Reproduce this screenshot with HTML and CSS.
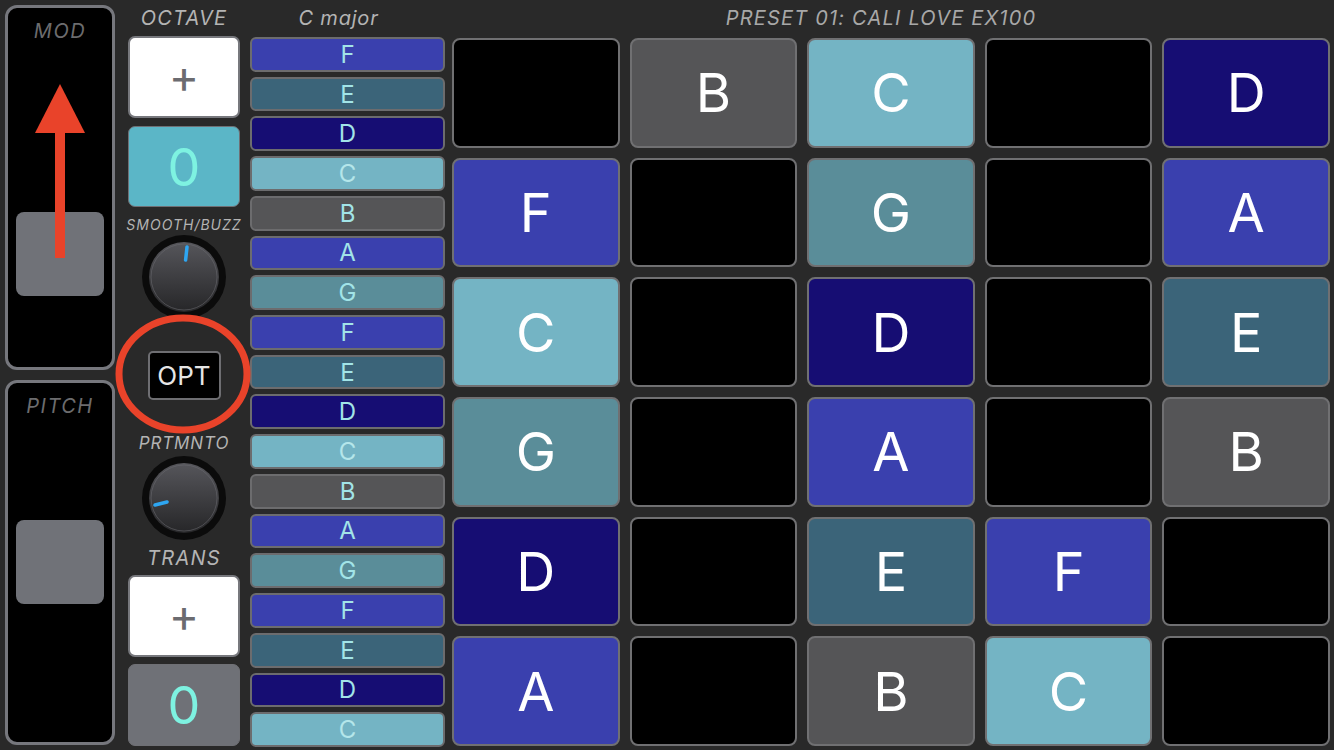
FILE: index.html
```html
<!DOCTYPE html>
<html>
<head>
    <title>Synth Pads</title>
    <link rel="stylesheet" href="styles.css">
</head>
<body>
    <div class="sliders">
        <div class="slider">
            <div class="slider-label">MOD</div>
            <div class="thumb mod-thumb"></div>
            <svg class="arrow" width="60" height="180" viewBox="0 0 60 180">
                <polygon points="30,0 55,49 5,49" fill="#e9432a"/>
                <rect x="25" y="45" width="10" height="129" fill="#e9432a"/>
            </svg>
        </div>
        <div class="slider">
            <div class="slider-label">PITCH</div>
            <div class="thumb pitch-thumb"></div>
        </div>
    </div>

    <div class="controls">
        <div class="label label-top">OCTAVE</div>
        <div class="plus">+</div>
        <div class="value octave">0</div>
        <div class="label label-small">SMOOTH/BUZZ</div>
        <div class="knob">
            <svg width="86" height="86" viewBox="0 0 86 86">
                <defs>
                    <linearGradient id="kg1" x1="0" y1="0" x2="0" y2="1">
                        <stop offset="0" stop-color="#56565b"/>
                        <stop offset="1" stop-color="#262628"/>
                    </linearGradient>
                </defs>
                <circle cx="43" cy="43" r="42" fill="#0b0b0b"/>
                <circle cx="43" cy="43" r="35" fill="url(#kg1)"/>
                <circle cx="43" cy="43" r="33" fill="none" stroke="#6a6a6f" stroke-width="0.8" opacity="0.7"/>
                <line x1="44.6" y1="26" x2="46" y2="13" stroke="#2ea6f2" stroke-width="3.5" stroke-linecap="round"/>
            </svg>
        </div>
        <div class="opt">OPT</div>
        <div class="label label-mid">PRTMNTO</div>
        <div class="knob knob-two">
            <svg width="86" height="86" viewBox="0 0 86 86">
                <defs>
                    <linearGradient id="kg2" x1="0" y1="0" x2="0" y2="1">
                        <stop offset="0" stop-color="#56565b"/>
                        <stop offset="1" stop-color="#262628"/>
                    </linearGradient>
                </defs>
                <circle cx="43" cy="43" r="42" fill="#0b0b0b"/>
                <circle cx="43" cy="43" r="35" fill="url(#kg2)"/>
                <circle cx="43" cy="43" r="33" fill="none" stroke="#6a6a6f" stroke-width="0.8" opacity="0.7"/>
                <line x1="26" y1="47" x2="14" y2="50" stroke="#2ea6f2" stroke-width="3.5" stroke-linecap="round"/>
            </svg>
        </div>
        <div class="label label-trans">TRANS</div>
        <div class="plus">+</div>
        <div class="value trans">0</div>
    </div>

    <div class="scale">
        <div class="label label-top scale-name">C major</div>
        <div class="notes" id="notes"></div>
    </div>

    <div class="pads">
        <div class="label label-top preset">PRESET 01: CALI LOVE EX100</div>
        <div class="grid" id="grid"></div>
    </div>

    <svg class="ring" width="140" height="124" viewBox="0 0 140 124">
        <ellipse cx="70" cy="62" rx="64" ry="56" fill="none" stroke="#e9432a" stroke-width="7"/>
    </svg>

    <script>
        var noteOrder = ['F','E','D','C','B','A','G','F','E','D','C','B','A','G','F','E','D','C'];
        var notes = document.getElementById('notes');
        for (var i = 0; i < noteOrder.length; i++) {
            var n = document.createElement('div');
            n.className = 'note n-' + noteOrder[i];
            n.textContent = noteOrder[i];
            notes.appendChild(n);
        }

        var pads = [
            '', 'B', 'C', '', 'D',
            'F', '', 'G', '', 'A',
            'C', '', 'D', '', 'E',
            'G', '', 'A', '', 'B',
            'D', '', 'E', 'F', '',
            'A', '', 'B', 'C', ''
        ];
        var grid = document.getElementById('grid');
        for (var j = 0; j < pads.length; j++) {
            var p = document.createElement('div');
            p.className = 'pad' + (pads[j] ? ' n-' + pads[j] : '');
            p.textContent = pads[j];
            grid.appendChild(p);
        }
    </script>
</body>
</html>
```

FILE: styles.css
```css
body {
    margin: 0;
    width: 1334px;
    height: 750px;
    background-color: #292929;
    font-family: "Inter", "Liberation Sans", sans-serif;
    display: flex;
    position: relative;
    overflow: hidden;
}
.label {
    color: #b4b4b4;
    font-style: italic;
    text-align: center;
    white-space: nowrap;
}
.label-top {
    height: 36px;
    line-height: 36px;
    font-size: 20px;
    letter-spacing: 1.2px;
}

/* left sliders */
.sliders {
    width: 110px;
    margin-left: 5px;
    padding-top: 5px;
    display: flex;
    flex-direction: column;
    gap: 10px;
}
.slider {
    height: 359px;
    background-color: #000;
    border: 3px solid #76777d;
    border-radius: 12px;
    position: relative;
}
.slider-label {
    color: #6c6c6e;
    font-style: italic;
    font-size: 20px;
    letter-spacing: 1.5px;
    text-align: center;
    margin-top: 11px;
    height: 25px;
}
.thumb {
    margin: 0 8px;
    height: 84px;
    background-color: #707278;
    border-radius: 8px;
}
.mod-thumb {
    margin-top: 168px;
}
.pitch-thumb {
    margin-top: 101px;
}
.arrow {
    position: absolute;
    left: 22px;
    top: 76px;
}

/* control column */
.controls {
    width: 112px;
    margin-left: 13px;
    display: flex;
    flex-direction: column;
    align-items: center;
}
.plus {
    width: 108px;
    height: 78px;
    background-color: #fff;
    border: 2px solid #77787d;
    border-radius: 7px;
    color: #6b6b70;
    font-size: 46px;
    line-height: 76px;
    text-align: center;
}
.value {
    width: 112px;
    height: 81px;
    margin-top: 8px;
    border-radius: 7px;
    color: #7ef2e1;
    font-size: 52px;
    line-height: 81px;
    text-align: center;
    box-sizing: border-box;
    border: 1px solid #6f7075;
}
.octave {
    background-color: #5bb6c7;
}
.trans {
    margin-top: 7px;
    height: 82px;
    background-color: #6f7177;
}
.label-small {
    font-size: 14px;
    letter-spacing: 1px;
    height: 16px;
    line-height: 16px;
    margin-top: 10px;
}
.knob {
    width: 86px;
    height: 86px;
    margin-top: 1px;
}
.knob svg {
    display: block;
}
.opt {
    margin-top: 31px;
    width: 69px;
    height: 45px;
    background-color: #000;
    border: 2px solid #6e6e72;
    border-radius: 5px;
    color: #e6e6e6;
    font-size: 26px;
    line-height: 45px;
    text-align: center;
}
.label-mid {
    font-size: 17px;
    letter-spacing: 0.9px;
    height: 18px;
    line-height: 18px;
    margin-top: 34px;
}
.knob-two {
    margin-top: 3px;
}
.label-trans {
    font-size: 20px;
    letter-spacing: 1.3px;
    height: 34px;
    line-height: 34px;
}

/* scale column */
.scale {
    width: 195px;
    margin-left: 10px;
}
.scale-name {
    height: 37px;
    padding-right: 18px;
    letter-spacing: 0.8px;
}
.notes {
    height: 710px;
    display: flex;
    flex-direction: column;
    gap: 5px;
}
.note {
    flex: 1;
    border: 2px solid #6c6c6e;
    border-radius: 6px;
    color: #a2e4e8;
    font-size: 24px;
    display: flex;
    align-items: center;
    justify-content: center;
}

/* pads */
.pads {
    width: 878px;
    margin-left: 7px;
}
.preset {
    height: 38px;
    line-height: 36px;
    color: #a8a8a8;
    padding-right: 20px;
}
.grid {
    height: 708px;
    display: grid;
    grid-template-columns: repeat(5, 1fr);
    grid-template-rows: repeat(6, 1fr);
    gap: 10px;
}
.pad {
    background-color: #000;
    border: 2px solid #707072;
    border-radius: 8px;
    color: #fff;
    font-size: 54px;
    display: flex;
    align-items: center;
    justify-content: center;
}

/* note colours */
.n-A, .n-F { background-color: #3a40ae; }
.n-B { background-color: #555557; }
.n-C { background-color: #74b4c4; }
.n-D { background-color: #160d73; }
.n-E { background-color: #3b6479; }
.n-G { background-color: #5a8d99; }
.note.n-C { color: #b4e6ea; }

.ring {
    position: absolute;
    left: 113px;
    top: 312px;
}
```
